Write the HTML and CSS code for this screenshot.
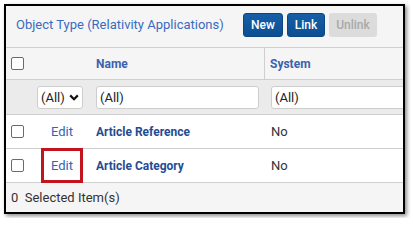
FILE: index.html
```html
<!DOCTYPE html>
<html>
<head>
<meta charset="utf-8">
<link rel="stylesheet" href="styles.css">
</head>
<body>
<div class="frame">
  <div class="titlebar">
    <div class="title">Object Type (Relativity Applications)</div>
    <div class="buttons">
      <span class="btn primary">New</span>
      <span class="btn primary">Link</span>
      <span class="btn disabled">Unlink</span>
    </div>
  </div>
  <div class="row head">
    <div class="cell chk"><span class="box"></span></div>
    <div class="cell"></div>
    <div class="cell name sep">Name</div>
    <div class="cell sys">System</div>
  </div>
  <div class="row filter">
    <div class="cell chk"></div>
    <div class="cell"><span class="select">(All) <svg width="10" height="7" viewBox="0 0 10 7"><path d="M1.2 1.4 L5 5.2 L8.8 1.4" fill="none" stroke="#111" stroke-width="2.2"/></svg></span></div>
    <div class="cell name"><span class="input">(All)</span></div>
    <div class="cell sys"><span class="input wide">(All)</span></div>
  </div>
  <div class="row data">
    <div class="cell chk"><span class="box"></span></div>
    <div class="cell edit"><span class="link">Edit</span></div>
    <div class="cell name"><span class="strong">Article Reference</span></div>
    <div class="cell sys">No</div>
  </div>
  <div class="row data">
    <div class="cell chk"><span class="box"></span></div>
    <div class="cell edit hl"><span class="link">Edit</span></div>
    <div class="cell name"><span class="strong">Article Category</span></div>
    <div class="cell sys">No</div>
  </div>
  <div class="footer">0&nbsp; Selected Item(s)</div>
</div>
</body>
</html>
```

FILE: styles.css
```css
html, body {
  margin: 0;
  padding: 0;
  background: #ffffff;
}
body {
  padding: 4px;
  font-family: Roboto, "Liberation Sans", sans-serif;
  font-size: 13px;
  color: #333;
}
.frame {
  width: 397px;
  height: 206px;
  border: 2px solid #000;
  box-shadow: 2px 2px 4px rgba(0,0,0,0.45);
  overflow: hidden;
  background: #f5f5f5;
  display: flex;
  flex-direction: column;
}
.titlebar {
  height: 41px;
  border-bottom: 1px solid #cfcfcf;
  display: flex;
  align-items: flex-start;
  background: #f5f5f5;
}
.title {
  color: #3a6bbf;
  font-size: 13px;
  padding: 11px 0 0 10px;
  line-height: 16px;
  flex: 1;
}
.buttons {
  display: flex;
  gap: 4px;
  padding-top: 7px;
  margin-right: 26px;
}
.btn {
  height: 24px;
  line-height: 24px;
  border-radius: 3px;
  font-size: 12px;
  font-weight: 500;
  text-align: center;
  box-sizing: border-box;
}
.btn.primary {
  background: linear-gradient(#155fa8, #0c4e92);
  color: #fff;
  border: 1px solid #0b4682;
  line-height: 22px;
}
.btn.primary:first-child { width: 40px; }
.btn.primary:nth-child(2) { width: 38px; }
.btn.disabled {
  width: 48px;
  background: #dcdcdc;
  color: #a9a9a9;
}
.row {
  display: grid;
  grid-template-columns: 25px 58px 176px 150px;
  flex: none;
}
.cell {
  display: flex;
  align-items: center;
  min-width: 0;
  white-space: nowrap;
}
.chk {
  padding-left: 5px;
}
.box {
  width: 13px;
  height: 13px;
  box-sizing: border-box;
  border: 1px solid #6b6b6b;
  border-radius: 2px;
  background: #fff;
}
.head {
  height: 31px;
  background: #f5f5f5;
  border-bottom: 1px solid #cfcfcf;
}
.head .cell {
  color: #3a62ad;
  font-weight: 700;
  font-size: 12px;
}
.head .name { padding-left: 7px; }
.head .sep { border-right: 1px solid #cfcfcf; }
.head .sys { padding-left: 5px; }
.filter {
  height: 34px;
  background: #ebebeb;
  border-bottom: 1px solid #cfcfcf;
}
.select {
  margin-left: 6px;
  width: 46px;
  height: 23px;
  box-sizing: border-box;
  border: 1px solid #cdcdcd;
  border-radius: 3px;
  background: #fff;
  display: flex;
  align-items: center;
  gap: 4px;
  padding-left: 3px;
  color: #222;
}
.input {
  height: 23px;
  box-sizing: border-box;
  border: 1px solid #cdcdcd;
  border-radius: 3px;
  background: #fff;
  display: flex;
  align-items: center;
  padding-left: 3px;
  color: #222;
}
.filter .name { padding-left: 7px; }
.filter .name .input { width: 163px; }
.filter .sys { padding-left: 6px; }
.input.wide { width: 150px; }
.data {
  height: 33px;
  background: #fff;
  border-bottom: 1px solid #cfcfcf;
}
.data .name { padding-left: 7px; }
.data .sys { padding-left: 6px; color: #333; }
.edit {
  position: relative;
}
.link {
  color: #2f66b3;
  margin-left: 20px;
}
.edit.hl::after {
  content: "";
  position: absolute;
  left: 10px;
  top: -1px;
  width: 42px;
  height: 35px;
  box-sizing: border-box;
  border: 3px solid #c1141c;
}
.strong {
  color: #1f4c94;
  font-weight: 700;
  font-size: 12px;
}
.footer {
  flex: 1;
  background: #f5f5f5;
  display: flex;
  align-items: center;
  padding-left: 5px;
  color: #333;
}
```
